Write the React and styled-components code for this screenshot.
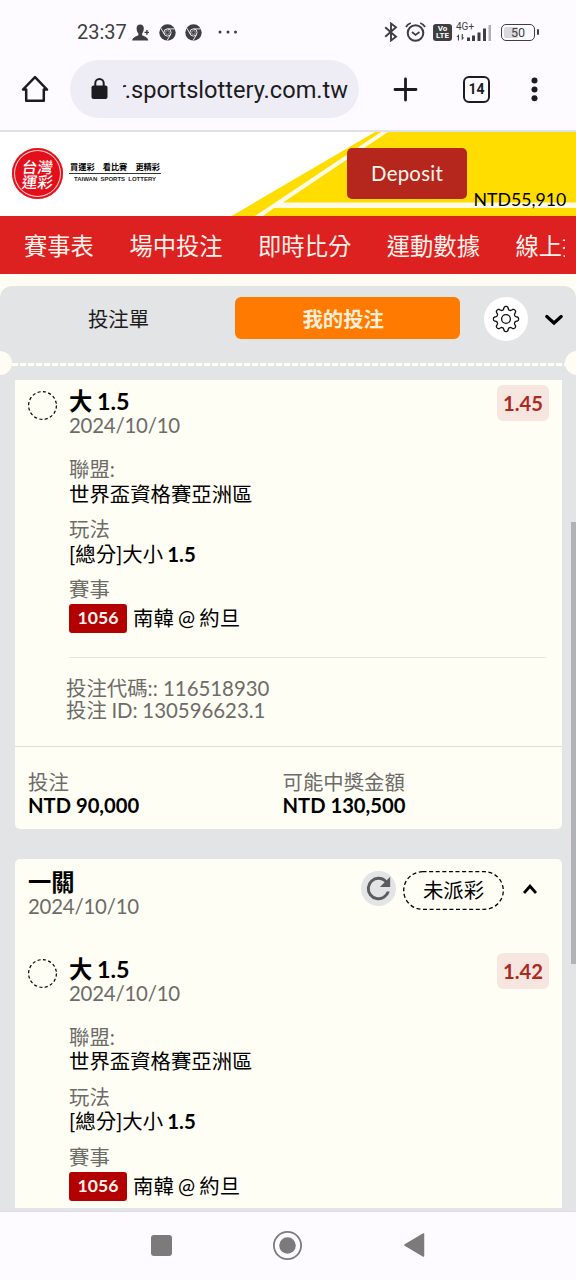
import React from "react";
import styled, { createGlobalStyle } from "styled-components";

const cjk = `"Noto Sans CJK TC", sans-serif`;

const GlobalStyle = createGlobalStyle`
  *, *::before, *::after { box-sizing: border-box; }
  body { margin: 0; background: #fdfbff; }
`;

const Screen = styled.div`
  width: 576px;
  height: 1280px;
  display: flex;
  flex-direction: column;
  overflow: hidden;
  background: #fdfbff;
  color: #000;
  font-family: Lato, ${cjk};
  white-space: nowrap;
`;

/* ---------- status bar ---------- */

const StatusBar = styled.div`
  flex: none;
  height: 60px;
  padding: 4px 41px 0 77px;
  display: flex;
  align-items: center;
  color: #3f3f42;
  font-family: Roboto, sans-serif;

  svg { display: block; flex: none; }
`;

const Clock = styled.span`
  width: 55px;
  font-size: 20px;
  line-height: 24px;
`;

const StatusGroup = styled.div`
  display: flex;
  align-items: center;
  gap: ${(p) => p.$gap}px;
`;

const MoreDots = styled.svg`
  margin-left: 16px;
`;

const Spacer = styled.div`
  flex: 1;
`;

const VolteBadge = styled.div`
  width: 19px;
  height: 17px;
  padding-top: 1px;
  border-radius: 3px;
  background: #3f3f42;
  color: #fff;
  font-size: 8px;
  font-weight: 700;
  line-height: 7.5px;
  text-align: center;
`;

const Network = styled.div`
  position: relative;
  width: 37px;
  height: 20px;
  margin: 0 3px 0 -1px;
`;

const NetworkLabel = styled.span`
  position: absolute;
  left: 0;
  top: 0;
  font-size: 10px;
  line-height: 10px;
`;

const Battery = styled.div`
  position: relative;
  width: 34px;
  height: 17px;
  border: 1.6px solid #3f3f42;
  border-radius: 5px;
  background: linear-gradient(90deg, #d9d8dc 0 16px, transparent 16px);
  background-clip: content-box;
  padding: 2px;
  font-size: 12.5px;
  line-height: 11.5px;
  text-align: center;

  &::after {
    content: "";
    position: absolute;
    right: -4.5px;
    top: 4px;
    width: 2px;
    height: 6px;
    border-radius: 1px;
    background: #3f3f42;
  }
`;

/* ---------- browser toolbar ---------- */

const Toolbar = styled.div`
  flex: none;
  height: 72px;
  padding: 0 37px 12px 21px;
  display: flex;
  align-items: center;
  border-bottom: 2px solid #e0dfe8;
  color: #1b1b20;
  font-family: Roboto, sans-serif;

  svg { display: block; flex: none; }
`;

const AddressPill = styled.div`
  flex: none;
  width: 289px;
  height: 58px;
  margin: 0 34px 0 21px;
  padding: 2px 11px 0 21px;
  display: flex;
  align-items: center;
  gap: 15px;
  border-radius: 29px;
  background: #eeedf6;

  svg { margin-top: -3px; }
`;

const Address = styled.div`
  flex: 1;
  display: flex;
  justify-content: flex-end;
  overflow: hidden;
  font-size: 23.6px;
  line-height: 30px;
`;

const TabCount = styled.div`
  flex: none;
  width: 27px;
  height: 27px;
  margin: 0 41px 0 45px;
  border: 2.6px solid #1b1b20;
  border-radius: 6px;
  font-size: 14px;
  font-weight: 700;
  line-height: 22px;
  text-align: center;
`;

/* ---------- site header ---------- */

const Banner = styled.header`
  position: relative;
  flex: none;
  height: 84px;
  display: flex;
  background: #fff;
  overflow: hidden;
`;

const BannerArt = styled.svg`
  position: absolute;
  inset: 0;
`;

const BannerContent = styled.div`
  position: relative;
  flex: 1;
  display: flex;
  padding: 16px 11px 0 12px;
`;

const Seal = styled.div`
  flex: none;
  width: 51px;
  height: 51px;
  padding-top: 10.5px;
  border-radius: 50%;
  box-shadow: inset 0 0 0 2px #e3101c, inset 0 0 0 3px #fbd5d5;
  background: #e3101c;
  color: #fff;
  font-family: ${cjk};
  font-size: 15.5px;
  font-weight: 500;
  line-height: 15px;
  text-align: center;

  span { display: block; transform: skewX(-7deg); }
`;

const Slogan = styled.div`
  flex: none;
  width: 92px;
  margin: 11px 186px 0 6px;
  display: flex;
  flex-direction: column;
  align-items: center;
`;

const SloganTop = styled.div`
  width: 100%;
  padding: 0 1px 0;
  display: flex;
  justify-content: space-between;
  height: 15px;
  border-bottom: 1px solid #333;
  font-family: ${cjk};
  font-size: 8.2px;
  font-weight: 700;
  line-height: 14px;
`;

const SloganBottom = styled.div`
  font-family: "Liberation Sans", sans-serif;
  font-size: 6px;
  font-weight: 700;
  line-height: 10px;
  color: #222;
  word-spacing: 1.5px;
`;

const DepositButton = styled.button`
  flex: none;
  width: 120px;
  height: 51px;
  padding: 0;
  border: 0;
  border-radius: 5px;
  background: #b5271c;
  color: #fff6ee;
  font: 400 20.4px/51px Lato, ${cjk};
  letter-spacing: 0.25px;
`;

const Balance = styled.div`
  margin: 39.5px 0 0 6.5px;
  font-size: 17.7px;
  line-height: 24px;
`;

const NavBar = styled.nav`
  flex: none;
  height: 58px;
  padding: 0 11px 0 24px;
  background: #dd2020;
`;

const NavTrack = styled.div`
  display: flex;
  height: 58px;
  gap: 35.5px;
  overflow: hidden;
  color: #fff3ec;
  font-size: 23.3px;
  line-height: 61px;
`;

/* ---------- bet panel ---------- */

const Page = styled.main`
  position: relative;
  flex: none;
  height: 937px;
  padding-top: 12px;
  background: #fffdf3;
  overflow: hidden;
`;

const Panel = styled.section`
  position: relative;
  height: 925px;
  display: flex;
  flex-direction: column;
  border-radius: 12px 12px 0 0;
  background: #e3e4e6;
`;

const Tabs = styled.div`
  flex: none;
  height: 77px;
  padding: 11px 13px 0 0;
  display: flex;
  align-items: flex-start;
  justify-content: space-between;

  svg { display: block; flex: none; }
`;

const Tab = styled.div`
  flex: none;
  width: ${(p) => (p.$active ? 225 : 235)}px;
  height: 42px;
  padding: ${(p) => (p.$active ? "0 9px 0 0" : "0 0 0 2px")};
  border-radius: 6px;
  background: ${(p) => (p.$active ? "#ff7a00" : "transparent")};
  color: ${(p) => (p.$active ? "#ffefd8" : "#1c1c1e")};
  font-size: 20.4px;
  font-weight: ${(p) => (p.$active ? 700 : 400)};
  line-height: 44px;
  text-align: center;
`;

const GearButton = styled.div`
  flex: none;
  width: 44px;
  height: 44px;
  margin: -0.5px 17px 0 23.500px;
  display: flex;
  align-items: center;
  justify-content: center;
  border-radius: 50%;
  background: #fff;
`;

const Perforation = styled.div`
  position: relative;
  flex: none;
  height: 3px;
  margin: 0 11px 14px 12px;
  background: repeating-linear-gradient(90deg, #fffef5 0 5.6px, transparent 5.6px 8px);
`;

const Notch = styled.span`
  position: absolute;
  top: -12px;
  ${(p) => p.$side}: -24px;
  width: 24px;
  height: 24px;
  border-radius: 50%;
  background: #fffdf3;
`;

const Card = styled.article`
  flex: none;
  width: 547px;
  margin: 0 0 30px 15px;
  padding-bottom: ${(p) => p.$bottom || 0}px;
  border-radius: ${(p) => p.$radius};
  background: #fffef5;
`;

const CardHeader = styled.div`
  height: 88.5px;
  padding: 10px 25px 0 13px;
  display: flex;
  align-items: flex-start;
  justify-content: space-between;
`;

const HeaderActions = styled.div`
  display: flex;
  align-items: center;
  padding-top: 2px;

  > svg { display: block; margin: -3px 0 0 19px; }
`;

const RefreshButton = styled.span`
  width: 35px;
  height: 35px;
  margin: -4px 7px 0 0;
  display: flex;
  align-items: center;
  justify-content: center;
  border-radius: 50%;
  background: #e3e4e6;
`;

const StatusPill = styled.div`
  position: relative;
  width: 101px;
  height: 39px;
  font-size: 20.4px;
  line-height: 38px;
  text-align: center;

  svg { position: absolute; inset: 0; }
`;

const Leg = styled.div`
  display: flex;
  align-items: flex-start;
  padding: 8px 13px 0 13px;

  > svg { flex: none; margin: 3px 12px 0 0; }
`;

const LegBody = styled.div`
  flex: 1;
`;

const Title = styled.div`
  font-size: 23.3px;
  font-weight: 700;
  line-height: 26px;
  height: 25px;
  word-spacing: -1px;
`;

const DateLine = styled.div`
  font-size: 20.4px;
  line-height: 24.5px;
  letter-spacing: -0.22px;
  color: #6d6c69;
`;

const Field = styled.div`
  margin-top: ${(p) => p.$gap}px;
  font-size: 20.4px;
  line-height: 24.5px;
  word-spacing: -1px;
`;

const Label = styled.div`
  color: #6d6c69;
`;

const Match = styled.div`
  display: flex;
  align-items: center;
  gap: 6px;
  margin-top: 2.5px;
`;

const EventCode = styled.span`
  width: 58px;
  height: 29px;
  border-radius: 3px;
  background: #b30000;
  color: #fff3ec;
  font-size: 17.6px;
  font-weight: 700;
  line-height: 28px;
  text-align: center;
`;

const Odds = styled.div`
  width: 52px;
  height: 36px;
  margin-top: -3px;
  border-radius: 6px;
  background: #f7e6df;
  color: #a92b22;
  font-size: 20.2px;
  font-weight: 700;
  line-height: 36px;
  text-align: center;
`;

const Reference = styled.div`
  margin: 24px 16px 0 54px;
  height: 89px;
  padding-top: 18.5px;
  border-top: 1px solid #e6e4de;
  color: #6d6c69;
  font-size: 20.4px;
  line-height: 22px;
`;

const ReferenceLine = styled.div`
  margin-left: -3px;
  word-spacing: ${(p) => p.$tight ? "-0.6px" : "0"};
`;

const Totals = styled.div`
  display: grid;
  grid-template-columns: 254.5px 1fr;
  height: 83px;
  padding: 24px 13px 0;
  border-top: 1px solid #e0ddd8;
  font-size: 20.4px;
  line-height: 23px;
`;

const Amount = styled.div`
  font-size: 20.2px;
  font-weight: 700;
`;

const ScrollThumb = styled.div`
  position: absolute;
  right: 0;
  top: 236px;
  width: 5px;
  height: 442px;
  background: #b2b2b6;
`;

const SystemNav = styled.div`
  flex: 1;
  padding: 0 1px 2px 0;
  border-top: 1px solid #dcdbe6;
  display: flex;
  justify-content: center;
  align-items: center;
  gap: 101.5px;
`;

/* ---------- drawings ---------- */

const ChromeGlyph = () => (
  <svg width="17" height="17" viewBox="0 0 17 17">
    <circle cx="8.5" cy="8.5" r="8.2" fill="#3f3f42" />
    <g fill="none" stroke="#fdfbff" strokeWidth="0.9">
      <circle cx="8.5" cy="8.5" r="3.6" />
      <path d="M8.5 4.9H15.8M5.4 10.3 1.7 4M11.6 10.3 8 16.7" />
    </g>
    <circle cx="8.5" cy="8.5" r="1.9" fill="none" stroke="#aaa" strokeWidth="0.8" />
  </svg>
);

const gearPath = () => {
  const points = [];
  for (let i = 0; i < 240; i += 1) {
    const a = (i / 240) * Math.PI * 2;
    const r = 11 + 1.7 * Math.tanh(1.6 * Math.cos(8 * a));
    points.push(`${(14 + r * Math.sin(a)).toFixed(2)} ${(14 - r * Math.cos(a)).toFixed(2)}`);
  }
  return `M${points.join("L")}Z`;
};

const Gear = () => (
  <svg width="28" height="28" viewBox="0 0 28 28" fill="none" stroke="#111" strokeWidth="1.3">
    <path d={gearPath()} />
    <circle cx="14" cy="14" r="4.4" />
  </svg>
);

const DashedCircle = () => (
  <svg width="29" height="29" viewBox="0 0 29 29">
    <circle cx="14.5" cy="14.5" r="13.9" fill="none" stroke="#000" strokeWidth="1.2" strokeDasharray="3.1 2.36" />
  </svg>
);

function Selection({ odds }) {
  return (
    <Leg>
      <DashedCircle />
      <LegBody>
        <Title>大 1.5</Title>
        <DateLine>2024/10/10</DateLine>
        <Field $gap={19.5}>
          <Label>聯盟:</Label>
          <div>世界盃資格賽亞洲區</div>
        </Field>
        <Field $gap={11}>
          <Label>玩法</Label>
          <div>[總分]大小 <b>1.5</b></div>
        </Field>
        <Field $gap={11}>
          <Label>賽事</Label>
          <Match>
            <EventCode>1056</EventCode>
            <span>南韓 @ 約旦</span>
          </Match>
        </Field>
      </LegBody>
      <Odds>{odds}</Odds>
    </Leg>
  );
}

export default function App() {
  return (
    <Screen>
      <GlobalStyle />
      <StatusBar>
        <Clock>23:37</Clock>
        <StatusGroup $gap={9.5}>
          <svg width="17" height="17" viewBox="0 0 17 17" fill="#3f3f42">
            <path d="M8.2.5c2.5 0 3.7 1.7 3.6 4.2-.1 2.2-.8 3.7-1.7 4.8v1.6c.7 1.2 6 1.7 6.2 5.4H.2c.2-3.7 5.5-4.2 6.2-5.4V9.5C5.4 8.4 4.7 6.9 4.6 4.7 4.5 2.2 5.7.5 8.2.5z" />
            <path d="M14.9 6v4.800M12.500 8.400h4.500" stroke="#3f3f42" strokeWidth="1.4" />
          </svg>
          <ChromeGlyph />
          <ChromeGlyph />
        </StatusGroup>
        <MoreDots width="20" height="4" viewBox="0 0 20 4" fill="#3f3f42">
          <circle cx="2" cy="2" r="1.5" />
          <circle cx="10" cy="2" r="1.5" />
          <circle cx="17.5" cy="2" r="1.5" />
        </MoreDots>
        <Spacer />
        <StatusGroup $gap={5}>
          <svg width="14" height="20" viewBox="0 0 14 20" fill="none" stroke="#3f3f42" strokeWidth="1.9">
            <path d="M1.2 5.2 12 14.7 7 18.5V1.5l5 3.8L1.2 14.8" />
          </svg>
          <svg width="25" height="20" viewBox="0 0 25 20" fill="none" stroke="#3f3f42" strokeWidth="2">
            <circle cx="12.5" cy="11" r="7.8" />
            <path d="M9 10l3.500 3 4-3" strokeWidth="1.7" />
            <path d="M3 5c1-2 2.500-3.200 4.800-4M17.200 1c2.300.8 3.800 2 4.800 4" strokeWidth="1.8" />
          </svg>
          <VolteBadge>
            Vo
            <br />
            LTE
          </VolteBadge>
          <Network>
            <NetworkLabel>4G+</NetworkLabel>
            <svg width="37" height="20" viewBox="0 0 37 20" fill="#3f3f42">
              <path d="M.5 15 3 12v6.500H1.900V15zM8.200 15.500 5.700 18.500V12h1.100v3.500z" />
              <path d="M11 15.500h3V19h-3zM16 13.500h3V19h-3zM21.500 10.500h3V19h-3zM27 6.500h3V19h-3z" />
              <path d="M32.500 3h2.500v16h-2.500z" fill="#b0afb3" />
            </svg>
          </Network>
          <Battery>50</Battery>
        </StatusGroup>
      </StatusBar>

      <Toolbar>
        <svg width="28" height="28" viewBox="0 0 28 28" fill="none" stroke="#1b1b20" strokeWidth="2.5" strokeLinejoin="round">
          <path d="M2 14.5 14 2.2l12 12.300h-3.200v11.300H5.200V14.500z" />
        </svg>
        <AddressPill>
          <svg width="17" height="22" viewBox="0 0 17 22">
            <rect x="0.5" y="7.5" width="16" height="13.5" rx="2" fill="#1b1b20" />
            <path d="M4.300 8.500V5.300a4.200 4.200 0 0 1 8.400 0v3.200" fill="none" stroke="#1b1b20" strokeWidth="2" />
          </svg>
          <Address>
            <span>r.sportslottery.com.tw</span>
          </Address>
        </AddressPill>
        <svg width="25" height="25" viewBox="0 0 25 25" stroke="#1b1b20" strokeWidth="2.8" strokeLinecap="round">
          <path d="M12.500 2v21M2 12.500h21" />
        </svg>
        <TabCount>14</TabCount>
        <svg width="7" height="25" viewBox="0 0 7 25" fill="#1b1b20">
          <circle cx="3.5" cy="3.6" r="3" />
          <circle cx="3.5" cy="12.4" r="3" />
          <circle cx="3.5" cy="21.2" r="3" />
        </svg>
      </Toolbar>

      <Banner>
        <BannerArt width="576" height="84" viewBox="0 0 576 84">
          <path d="M375 0H576V84H231.500z" fill="#ffdd00" />
          <path d="M381 0h7L283 70.500h293v5.500H274L263 84h-8z" fill="#fffbe6" />
        </BannerArt>
        <BannerContent>
          <Seal>
            <span>台灣</span>
            <span>運彩</span>
          </Seal>
          <Slogan>
            <SloganTop>
              <span>買運彩</span>
              <span>看比賽</span>
              <span>更精彩</span>
            </SloganTop>
            <SloganBottom>TAIWAN SPORTS LOTTERY</SloganBottom>
          </Slogan>
          <DepositButton>Deposit</DepositButton>
          <Balance>NTD55,910</Balance>
        </BannerContent>
      </Banner>

      <NavBar>
        <NavTrack>
          <span>賽事表</span>
          <span>場中投注</span>
          <span>即時比分</span>
          <span>運動數據</span>
          <span>線上投注</span>
        </NavTrack>
      </NavBar>

      <Page>
        <Panel>
          <Tabs>
            <Tab>投注單</Tab>
            <Tab $active>我的投注</Tab>
            <GearButton>
              <Gear />
            </GearButton>
            <svg width="18" height="44" viewBox="0 0 18 44" fill="none" stroke="#000" strokeWidth="3.2">
              <path d="M1.800 19.500 9 26l7.200-6.500" strokeLinecap="round" />
            </svg>
          </Tabs>
          <Perforation>
            <Notch $side="left" />
            <Notch $side="right" />
          </Perforation>

          <Card $radius="0 0 5px 5px">
            <Selection odds="1.45" />
            <Reference>
              <ReferenceLine>投注代碼:: 116518930</ReferenceLine>
              <ReferenceLine $tight>投注 ID: 130596623.1</ReferenceLine>
            </Reference>
            <Totals>
              <div>
                <Label>投注</Label>
                <Amount>NTD 90,000</Amount>
              </div>
              <div>
                <Label>可能中獎金額</Label>
                <Amount>NTD 130,500</Amount>
              </div>
            </Totals>
          </Card>

          <Card $radius="5px 5px 0 0" $bottom={7}>
            <CardHeader>
              <div>
                <Title>一關</Title>
                <DateLine>2024/10/10</DateLine>
              </div>
              <HeaderActions>
                <RefreshButton>
                  <svg width="37" height="37" viewBox="0 0 24 24" fill="#5c5c5e">
                    <path d="M17.650 6.350A7.950 7.950 0 0 0 12 4a8 8 0 1 0 7.730 10h-2.080A6 6 0 1 1 12 6c1.660 0 3.140.690 4.220 1.780L13 11h7V4z" />
                  </svg>
                </RefreshButton>
                <StatusPill>
                  <svg width="101" height="39" viewBox="0 0 101 39">
                    <rect x="0.7" y="0.7" width="99.6" height="37.6" rx="18.8" fill="none" stroke="#000" strokeWidth="1.3" strokeDasharray="4 2.6" />
                  </svg>
                  未派彩
                </StatusPill>
                <svg width="14" height="12" viewBox="0 0 14 12" fill="none" stroke="#000" strokeWidth="2.8">
                  <path d="M1 10 7 3.200l6 6.800" />
                </svg>
              </HeaderActions>
            </CardHeader>
            <Selection odds="1.42" />
          </Card>
          <ScrollThumb />
        </Panel>
      </Page>

      <SystemNav>
        <svg width="21" height="21" viewBox="0 0 21 21">
          <rect width="21" height="21" rx="3" fill="#7b7b7b" />
        </svg>
        <svg width="29" height="29" viewBox="0 0 29 29">
          <circle cx="14.5" cy="14.5" r="13.6" fill="none" stroke="#7b7b7b" strokeWidth="1.8" />
          <circle cx="14.5" cy="14.5" r="8.3" fill="#7b7b7b" />
        </svg>
        <svg width="21" height="24" viewBox="0 0 21 24">
          <path d="M19.500 1v22L1 12z" fill="#7b7b7b" stroke="#7b7b7b" strokeWidth="1.5" strokeLinejoin="round" />
        </svg>
      </SystemNav>
    </Screen>
  );
}
